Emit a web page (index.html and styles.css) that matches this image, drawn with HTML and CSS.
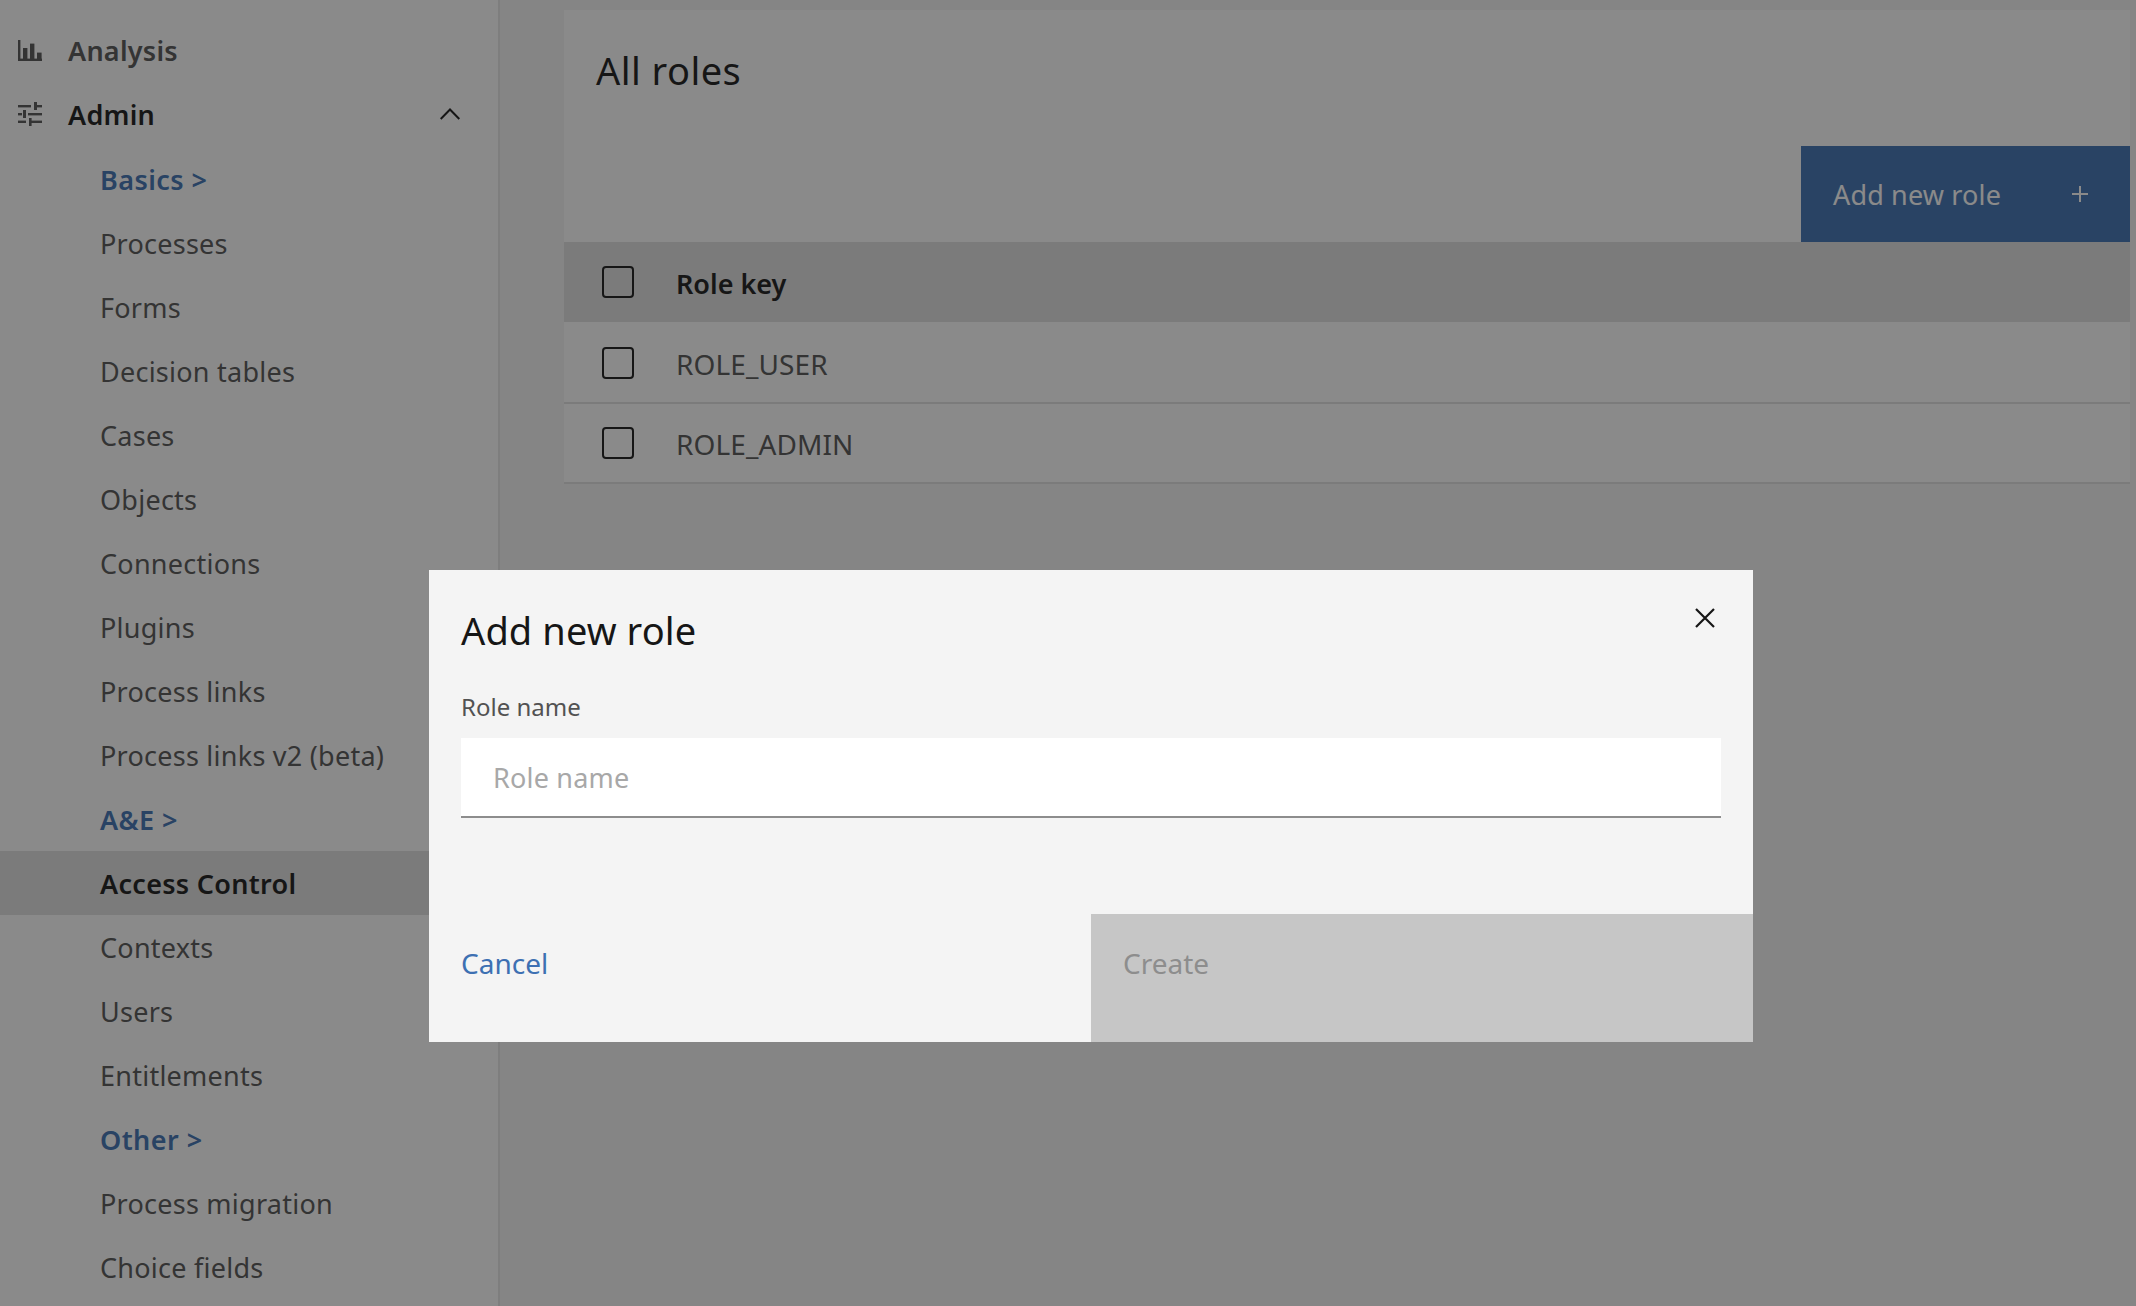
FILE: index.html
```html
<!DOCTYPE html>
<html>
  <head>
    <meta charset="UTF-8" />
    <title>All roles</title>
    <link rel="stylesheet" href="styles.css">
  </head>
  <body>
    <div class="page">
      <nav class="sidebar">
        <a class="nav-top">
          <svg class="nav-icon" width="24" height="24" viewBox="0 0 24 24" fill="currentColor">
            <rect x="0" y="1" width="2.4" height="21" />
            <rect x="0" y="19.6" width="24" height="2.4" />
            <rect x="5" y="9" width="4.4" height="12" />
            <rect x="12" y="4.6" width="4.4" height="16" />
            <rect x="19" y="13.6" width="4.6" height="7" />
          </svg>
          Analysis
        </a>
        <a class="nav-top nav-open">
          <svg class="nav-icon nav-icon-muted" width="24" height="26" viewBox="0 0 24 26" fill="currentColor">
            <rect x="0" y="3" width="13" height="2.4" />
            <rect x="16" y="0" width="3" height="8" />
            <rect x="19" y="3" width="5" height="2.4" />
            <rect x="0" y="11" width="4" height="2.4" />
            <rect x="5" y="8" width="3" height="8" />
            <rect x="10" y="11" width="14" height="2.4" />
            <rect x="0" y="18.6" width="8" height="2.4" />
            <rect x="11" y="16" width="2.6" height="8" />
            <rect x="13" y="18.6" width="11" height="2.4" />
          </svg>
          Admin
          <svg class="nav-chevron" width="20" height="12" viewBox="0 0 20 12" fill="none" stroke="currentColor" stroke-width="2">
            <polyline points="0.7,11 10,1.5 19.3,11" />
          </svg>
        </a>
        <a class="nav-group">Basics &gt;</a>
        <a class="nav-item">Processes</a>
        <a class="nav-item">Forms</a>
        <a class="nav-item">Decision tables</a>
        <a class="nav-item">Cases</a>
        <a class="nav-item">Objects</a>
        <a class="nav-item">Connections</a>
        <a class="nav-item">Plugins</a>
        <a class="nav-item">Process links</a>
        <a class="nav-item">Process links v2 (beta)</a>
        <a class="nav-group">A&amp;E &gt;</a>
        <a class="nav-item nav-active">Access Control</a>
        <a class="nav-item">Contexts</a>
        <a class="nav-item">Users</a>
        <a class="nav-item">Entitlements</a>
        <a class="nav-group">Other &gt;</a>
        <a class="nav-item">Process migration</a>
        <a class="nav-item">Choice fields</a>
      </nav>

      <main class="content">
        <section class="panel">
          <h1 class="panel-title">All roles</h1>
          <div class="toolbar">
            <button class="add-button">
              Add new role
              <svg width="16" height="16" viewBox="0 0 16 16" fill="none" stroke="currentColor" stroke-width="2">
                <path d="M8 0v16M0 8h16" />
              </svg>
            </button>
          </div>
          <table class="roles">
            <thead>
              <tr>
                <th class="check-cell"><input type="checkbox" /></th>
                <th class="key-cell">Role key</th>
              </tr>
            </thead>
            <tbody>
              <tr>
                <td class="check-cell"><input type="checkbox" /></td>
                <td class="key-cell">ROLE_USER</td>
              </tr>
              <tr>
                <td class="check-cell"><input type="checkbox" /></td>
                <td class="key-cell">ROLE_ADMIN</td>
              </tr>
            </tbody>
          </table>
        </section>
      </main>
    </div>

    <div class="overlay">
      <div class="modal">
        <div class="modal-head">
          <h2 class="modal-title">Add new role</h2>
          <svg class="modal-close" width="20" height="20" viewBox="0 0 20 20" fill="none" stroke="#161616" stroke-width="2.2">
            <path d="M1 1l18 18M19 1L1 19" />
          </svg>
        </div>
        <div class="modal-body">
          <label class="field-label" for="role-name">Role name</label>
          <input class="field-input" id="role-name" type="text" placeholder="Role name" />
        </div>
        <div class="modal-foot">
          <button class="btn-cancel">Cancel</button>
          <button class="btn-create" disabled>Create</button>
        </div>
      </div>
    </div>
  </body>
</html>
```

FILE: styles.css
```css
* {
  box-sizing: border-box;
}

body {
  margin: 0;
  height: 100vh;
  overflow: hidden;
  background-color: #f4f4f4;
  color: #161616;
  font-family: "Noto Sans", Roboto, Arial, sans-serif;
}

.page {
  display: flex;
  height: 100%;
}

/* Sidebar */
.sidebar {
  width: 500px;
  flex-shrink: 0;
  padding-top: 19px;
  background-color: #fff;
  border-right: 2px solid #e6e6e6;
  overflow: hidden;
}

.nav-top,
.nav-group,
.nav-item {
  display: flex;
  align-items: center;
  height: 64px;
  font-size: 27px;
  letter-spacing: 0.25px;
}

.nav-top {
  padding-left: 18px;
  padding-bottom: 2px;
  font-weight: 600;
  color: #525252;
}

.nav-open {
  color: #161616;
}

.nav-icon {
  margin-top: 2px;
  margin-right: 26px;
  color: #525252;
}

.nav-chevron {
  margin-left: auto;
  margin-right: 38px;
  color: #161616;
}

.nav-group,
.nav-item {
  padding-left: 100px;
}

.nav-group {
  font-weight: 600;
  letter-spacing: 0.45px;
  color: #3d70b2;
}

.nav-item {
  color: #525252;
}

.nav-active {
  background-color: #e0e0e0;
  color: #161616;
  font-weight: 600;
  letter-spacing: 0.3px;
}

/* Main area */
.content {
  flex: 1;
  padding: 10px 6px 0 64px;
}

.panel {
  background-color: #fff;
}

.panel-title {
  margin: 0;
  height: 136px;
  padding: 34px 32px 0;
  font-size: 38px;
  font-weight: 400;
  line-height: 52px;
  letter-spacing: 0.45px;
}

.toolbar {
  display: flex;
  justify-content: flex-end;
}

.add-button {
  display: flex;
  align-items: center;
  justify-content: space-between;
  width: 329px;
  height: 96px;
  padding: 0 42px 0 32px;
  border: none;
  background-color: #3d70b2;
  color: #fff;
  font-family: inherit;
  font-size: 27px;
  letter-spacing: 0.15px;
}

.roles {
  width: 100%;
  border-collapse: separate;
  border-spacing: 0;
  font-size: 28px;
  letter-spacing: 0.1px;
}

.roles th {
  height: 80px;
  padding: 0;
  background-color: #e0e0e0;
  text-align: left;
  font-size: 27px;
  font-weight: 600;
  letter-spacing: 0;
}

.roles td {
  height: 80px;
  padding: 0;
  color: #525252;
  border-bottom: 2px solid #e0e0e0;
}

.roles .key-cell {
  padding-top: 2px;
}

/* the first row comes out 2px taller than the next one */
.roles tbody tr:first-child td {
  height: 82px;
  padding-top: 2px;
}

.roles tbody tr:first-child .key-cell {
  padding-top: 4px;
}

.roles .check-cell {
  width: 112px;
  padding-left: 38px;
}

input[type="checkbox"] {
  display: block;
  width: 32px;
  height: 32px;
  margin: 0;
  appearance: none;
  -webkit-appearance: none;
  border: 2px solid #161616;
  border-radius: 4px;
  background: none;
}

/* Modal */
.overlay {
  position: fixed;
  inset: 0;
  padding: 570px 0 0 429px;
  background-color: rgba(22, 22, 22, 0.5);
}

.modal {
  width: 1324px;
  height: 472px;
  display: flex;
  flex-direction: column;
  background-color: #f4f4f4;
}

.modal-head {
  display: flex;
  justify-content: space-between;
  padding: 32px 38px 0 32px;
  height: 112px;
}

.modal-title {
  margin: 0;
  font-size: 38px;
  font-weight: 400;
  line-height: 56px;
  letter-spacing: 0.1px;
}

.modal-close {
  margin-top: 6px;
}

.modal-body {
  padding: 0 32px;
}

.field-label {
  display: block;
  height: 56px;
  font-size: 24px;
  line-height: 50px;
  color: #525252;
}

.field-input {
  display: block;
  width: 100%;
  height: 80px;
  padding: 0 32px;
  border: none;
  border-bottom: 2px solid #8d8d8d;
  background-color: #fff;
  font-family: inherit;
  font-size: 27px;
  letter-spacing: 0.2px;
  outline: none;
}

.field-input::placeholder {
  color: #a8a8a8;
}

.modal-foot {
  display: flex;
  margin-top: auto;
  height: 128px;
}

.btn-cancel,
.btn-create {
  border: none;
  text-align: left;
  font-family: inherit;
  font-size: 28px;
  padding: 0 32px 30px;
}

.btn-cancel {
  width: 662px;
  background: none;
  color: #3d70b2;
}

.btn-create {
  flex: 1;
  background-color: #c6c6c6;
  color: #8d8d8d;
}
```
